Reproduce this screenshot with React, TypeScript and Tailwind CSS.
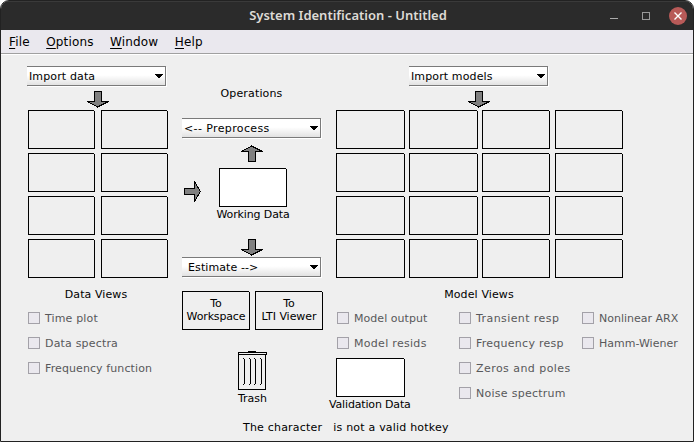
import type { ReactNode } from "react";

type Direction = "down" | "up" | "right";

function Arrow({ direction, className = "" }: { direction: Direction; className?: string }) {
  const common = { fill: "#808080", stroke: "#000", strokeWidth: 1, shapeRendering: "crispEdges" as const };
  if (direction === "right") {
    return (
      <svg width="17" height="22" viewBox="0 0 17 22" className={`block shrink-0 ${className}`}>
        <path d="M.5 7.5H10.5V.5L16.5 10.5L10.5 20.5V13.5H.5Z" {...common} />
      </svg>
    );
  }
  return (
    <svg width="22" height="17" viewBox="0 0 22 17" className={`block shrink-0 ${direction === "up" ? "-scale-y-100" : ""} ${className}`}>
      <path d="M7.5 .5H14.5V10.5H21.5L10.5 16L.5 10.5H7.5Z" {...common} />
    </svg>
  );
}

function Combo({ label, indent = "pl-[2px]", tracking = "" }: { label: string; indent?: string; tracking?: string }) {
  return (
    <div className={`flex h-5 w-[139px] shrink-0 items-center justify-between border-y border-r border-[#7a7a7a] bg-linear-to-b from-white from-45% to-[#e2e2e2] pr-[2px] shadow-[1px_1px_0_#fff] ${indent}`}>
      <span className={`whitespace-pre pt-px leading-[17px] ${tracking}`}>{label}</span>
      <svg width="8" height="4" viewBox="0 0 8 4" shapeRendering="crispEdges" className="block">
        <path d="M0 0h8v1h-1v1h-1v1h-1v1h-2v-1h-1v-1h-1v-1h-1z" />
      </svg>
    </div>
  );
}

function Slot({ width = "w-[67px]", fill = "bg-[#efefef]", children }: { width?: string; fill?: string; children?: ReactNode }) {
  return (
    <div className={`relative h-[39px] shrink-0 border border-black text-center after:absolute after:-top-px after:-right-px after:size-px after:bg-[#efefef] ${width} ${fill}`}>
      {children}
    </div>
  );
}

function Check({ label, tracking = "" }: { label: string; tracking?: string }) {
  return (
    <label className="flex h-3 items-center gap-[5px] whitespace-nowrap text-[#58585a]">
      <span className="size-3 shrink-0 border border-[#a3a1a8] bg-[#eae8ee]" />
      <span className={`pt-[2px] leading-3 ${tracking}`}>{label}</span>
    </label>
  );
}

function TrashCan() {
  return (
    <svg width="29" height="39" viewBox="0 0 29 39" shapeRendering="crispEdges" className="ml-[56px] block" fill="none" stroke="#000">
      <path d="M10 .5H18M0 1.5H29M28.5 1V4M0 3.5H29M.5 1V39M27.5 4V39M0 38.5H28" />
      <path d="M5 7.5h1M6.5 8V33M5 33.5h1M11 7.5h1M12.5 8V33M11 33.5h1M16 7.5h1M17.5 8V33M16 33.5h1M22 7.5h1M23.5 8V33M22 33.5h1" />
    </svg>
  );
}

const menus = ["File", "Options", "Window", "Help"];
const modelWidths = ["w-[69px]", "w-[69px]", "w-[68px]", "w-[68px]"];

export default function App() {
  return (
    <div className="h-[442px] w-[694px] overflow-hidden bg-white">
      <div className="flex h-full flex-col overflow-hidden rounded-t-[9px] border border-[#222] bg-[#efefef] font-['DejaVu_Sans',sans-serif] text-[11px] text-black">
        <header className="flex h-[29px] shrink-0 items-center border-t border-[#3a3a3a] bg-[#2b2b2b] pr-[6px]">
          <h1 className="flex-1 pl-[85px] text-center font-['Noto_Sans',sans-serif] text-[13px] font-semibold text-[#dedbd6]">System Identification - Untitled</h1>
          <span className="mt-1 mr-6 h-px w-2 bg-[#aaa]" />
          <span className="mr-[19px] size-2 border border-[#999]" />
          <svg width="18" height="18" viewBox="0 0 18 18">
            <circle cx="9" cy="9" r="9" fill="#b85a58" />
            <path d="M5.5 5.5l7 7M12.5 5.5l-7 7" stroke="#fff" strokeWidth="1.4" />
          </svg>
        </header>
        <nav className="flex h-6 shrink-0 gap-[16.5px] border-b border-[#a0a0a0] bg-[#eae8ee] pt-px pl-2 text-[12px] leading-[23px] tracking-[0.15px]">
          {menus.map((m) => (
            <span key={m}>
              <u className="underline-offset-2">{m[0]}</u>
              {m.slice(1)}
            </span>
          ))}
        </nav>
        <main className="flex flex-1 flex-col border-t border-white pl-[26px]">
          <div className="flex h-[365px]">
            <section className="flex w-[155px] shrink-0 flex-col pt-[11px]">
              <Combo label="Import data" tracking="tracking-[0.13px]" />
              <Arrow direction="down" className="mt-[5px] ml-[60px]" />
              <div className="mt-[2px] ml-px grid w-fit grid-cols-2 gap-x-[6px] gap-y-1">
                {Array.from({ length: 8 }, (_, i) => <Slot key={i} />)}
              </div>
              <h2 className="mt-[9px] ml-px w-[136px] text-center leading-4 tracking-[0.08px]">Data Views</h2>
              <div className="mt-[9px] ml-px flex flex-col gap-[13px]">
                <Check label="Time plot" tracking="tracking-[0.15px]" />
                <Check label="Data spectra" tracking="tracking-[0.18px]" />
                <Check label="Frequency function" tracking="tracking-[0.1px]" />
              </div>
            </section>

            <section className="flex w-[154px] shrink-0 flex-col pt-[31px]">
              <h2 className="w-[139px] text-center leading-4 tracking-[0.15px]">Operations</h2>
              <div className="mt-4">
                <Combo label="<-- Preprocess" tracking="tracking-[0.38px]" />
              </div>
              <Arrow direction="up" className="mt-[7px] ml-[59px]" />
              <div className="mt-[6px] flex h-[39px] pl-[2px]">
                <Arrow direction="right" className="mt-[13px] mr-[18px]" />
                <Slot width="w-[68px]" fill="bg-white" />
              </div>
              <p className="w-[142px] text-center leading-[15px] tracking-[-0.12px]">Working Data</p>
              <Arrow direction="down" className="mt-[17px] ml-[59px]" />
              <div className="mt-px">
                <Combo label="Estimate -->" indent="pl-[6px]" tracking="tracking-[0.1px]" />
              </div>
              <div className="mt-[14px] flex gap-[5px] leading-[13px]">
                <Slot width="w-[68px]"><div className="pt-[5px] tracking-[-0.15px]">To<br />Workspace</div></Slot>
                <Slot width="w-[68px]"><div className="pt-[5px] tracking-[-0.05px]">To<br />LTI Viewer</div></Slot>
              </div>
              <div className="mt-[21px] w-[141px]">
                <TrashCan />
                <p className="text-center leading-[17px]">Trash</p>
              </div>
            </section>

            <section className="flex flex-1 flex-col pt-[11px]">
              <div className="pl-[73px]">
                <Combo label="Import models" tracking="tracking-[0.12px]" />
                <Arrow direction="down" className="mt-[5px] ml-[59px]" />
              </div>
              <div className="mt-[2px] grid w-fit grid-cols-[repeat(4,69px)] gap-1">
                {Array.from({ length: 16 }, (_, i) => <Slot key={i} width={modelWidths[i % 4]} />)}
              </div>
              <h2 className="mt-[9px] w-[286px] text-center leading-4 tracking-[0.12px]">Model Views</h2>
              <div className="mt-[9px] flex pl-px">
                <div className="flex w-[122px] shrink-0 flex-col">
                  <div className="flex flex-col gap-[13px]">
                    <Check label="Model output" tracking="tracking-[0.04px]" />
                    <Check label="Model resids" tracking="tracking-[0.3px]" />
                  </div>
                  <div className="mt-[9px] -ml-px">
                    <Slot width="w-[69px]" fill="bg-white" />
                    <p className="-ml-[7px] leading-[16px] tracking-[-0.16px]">Validation Data</p>
                  </div>
                </div>
                <div className="flex w-[123px] shrink-0 flex-col gap-[13px]">
                  <Check label="Transient resp" tracking="tracking-[0.42px]" />
                  <Check label="Frequency resp" tracking="tracking-[0.26px]" />
                  <Check label="Zeros and poles" tracking="tracking-[0.45px]" />
                  <Check label="Noise spectrum" tracking="tracking-[0.27px]" />
                </div>
                <div className="flex flex-col gap-[13px]">
                  <Check label="Nonlinear ARX" />
                  <Check label="Hamm-Wiener" />
                </div>
              </div>
            </section>
          </div>
          <footer className="whitespace-pre pl-[216px] leading-4 tracking-[0.2px]">The character   is not a valid hotkey</footer>
        </main>
      </div>
    </div>
  );
}
